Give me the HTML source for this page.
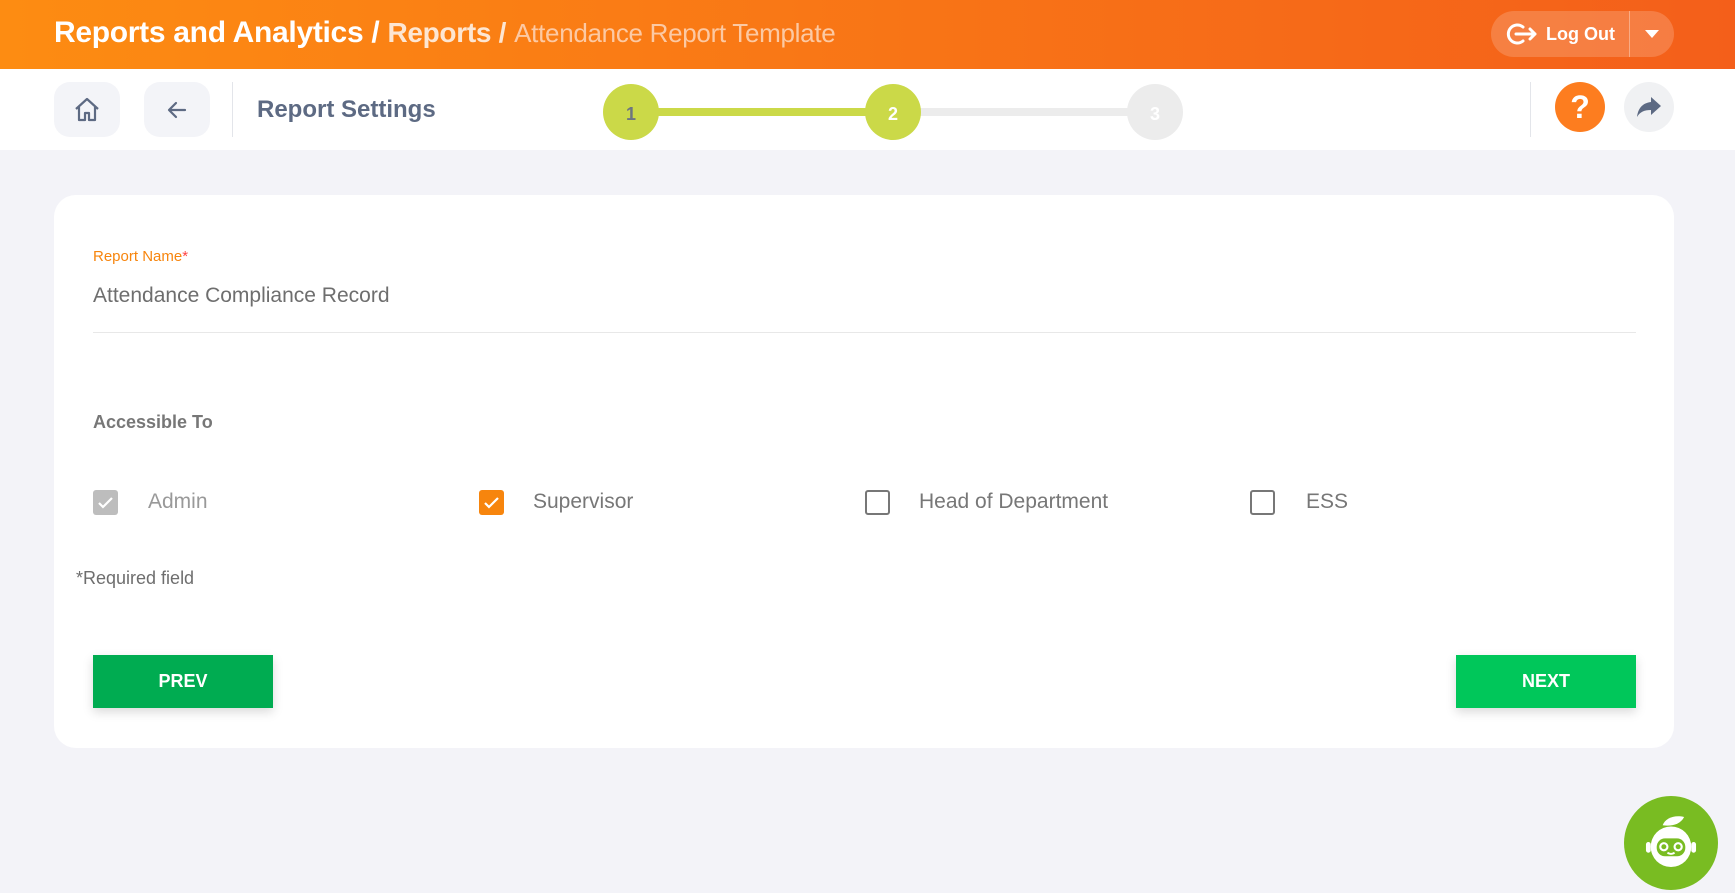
<!DOCTYPE html>
<html><head><meta charset="utf-8"><style>
*{box-sizing:border-box;margin:0;padding:0}
body{width:1735px;height:893px;overflow:hidden;background:#f3f3f8;font-family:"Liberation Sans",sans-serif;position:relative}
.hdr{position:absolute;left:0;top:0;width:1735px;height:69px;background:linear-gradient(90deg,#fd8c12,#f45f1a)}
.ttl{position:absolute;left:54px;top:16px;font-size:30px;font-weight:bold;color:#fff;letter-spacing:-0.3px;white-space:nowrap}
.ttl .b{color:#fde6d2;font-weight:bold;font-size:28px}
.ttl .c{color:#fcc9a3;font-weight:normal;font-size:26px}
.lo{position:absolute;left:1491px;top:11px;width:183px;height:46px;border-radius:23px;background:rgba(255,255,255,.18)}
.lo span{position:absolute;left:55px;top:13px;color:#fff;font-weight:bold;font-size:18px}
.lo .sep{position:absolute;left:138px;top:0;width:1px;height:46px;background:rgba(255,255,255,.35)}
.nav{position:absolute;left:0;top:69px;width:1735px;height:81px;background:#fff}
.sq{position:absolute;top:13px;width:66px;height:55px;border-radius:16px;background:#f3f4f8}
.vd{position:absolute;top:13px;width:1px;height:55px;background:#e3e5ea}
.rs{position:absolute;left:257px;top:27px;font-size:24px;font-weight:bold;color:#5d6a83}
.ln{position:absolute;top:39px;height:8px}
.st{position:absolute;top:15px;width:56px;height:56px;border-radius:50%;text-align:center;line-height:60px;font-weight:bold;font-size:18px}
.card{position:absolute;left:54px;top:195px;width:1620px;height:553px;background:#fff;border-radius:22px}
.lbl{position:absolute;left:93px;top:248px;font-size:15px;color:#f7850d}
.val{position:absolute;left:93px;top:284px;font-size:21px;color:#6e6e6e}
.ul{position:absolute;left:93px;top:332px;width:1543px;height:1px;background:#e8e8e8}
.acc{position:absolute;left:93px;top:412px;font-size:18px;font-weight:bold;color:#777}
.cb{position:absolute;top:490px;width:25px;height:25px;border-radius:3px}
.cl{position:absolute;top:490px;font-size:21px;color:#777}
.req{position:absolute;left:76px;top:568px;font-size:18px;color:#6e6e6e}
.btn{position:absolute;top:655px;width:180px;height:53px;color:#fff;font-weight:bold;font-size:18px;text-align:center;line-height:53px;box-shadow:0 4px 10px rgba(0,0,0,.15)}
.bot{position:absolute;left:1624px;top:796px;width:94px;height:94px;border-radius:50%;background:#79bc22}
</style></head><body>
<div class="hdr">
 <div class="ttl">Reports and Analytics / <span class="b">Reports /</span> <span class="c">Attendance Report Template</span></div>
 <div class="lo">
  <svg style="position:absolute;left:15px;top:11px" width="32" height="24" viewBox="0 0 32 24"><path d="M17 5A9 9 0 1 0 17 19" fill="none" stroke="#fff" stroke-width="3" stroke-linecap="round"/><path d="M10 12H29M24 7l5 5-5 5" fill="none" stroke="#fff" stroke-width="3" stroke-linecap="round" stroke-linejoin="round"/></svg>
  <span>Log Out</span><div class="sep"></div>
  <svg style="position:absolute;left:154px;top:19px" width="14" height="9"><path d="M0 0h14L7 8z" fill="#fff"/></svg>
 </div>
</div>
<div class="nav">
 <div class="sq" style="left:54px"><svg style="position:absolute;left:19px;top:14px" width="28" height="28" viewBox="0 0 28 28"><path d="M3 13L14 3l11 10M6 11v13h6v-7h4v7h6V11" fill="none" stroke="#5d6a83" stroke-width="2.2" stroke-linejoin="round"/></svg></div>
 <div class="sq" style="left:144px"><svg style="position:absolute;left:21px;top:16px" width="24" height="24" viewBox="0 0 24 24"><path d="M20 12H5M11 5l-7 7 7 7" fill="none" stroke="#5d6a83" stroke-width="2.2" stroke-linecap="round" stroke-linejoin="round"/></svg></div>
 <div class="vd" style="left:232px"></div>
 <div class="rs">Report Settings</div>
 <div class="ln" style="left:631px;width:262px;background:#cbd948"></div>
 <div class="ln" style="left:893px;width:262px;background:#ececec"></div>
 <div class="st" style="left:603px;background:#cbd948;color:#6d7580">1</div>
 <div class="st" style="left:865px;background:#cbd948;color:#fff">2</div>
 <div class="st" style="left:1127px;background:#ececec;color:#fff">3</div>
 <div class="vd" style="left:1530px"></div>
 <div style="position:absolute;left:1555px;top:13px;width:50px;height:50px;border-radius:50%;background:#fd7d1f;color:#fff;font-weight:bold;font-size:32px;text-align:center;line-height:50px">?</div>
 <div style="position:absolute;left:1624px;top:13px;width:50px;height:50px;border-radius:50%;background:#f0f1f3"><svg style="position:absolute;left:12px;top:13px" width="26" height="24" viewBox="0 0 26 24"><path d="M15 2l10 9-10 9v-5C8 15 4 17 1 22 2 14 6 8 15 7z" fill="#5d6a83"/></svg></div>
</div>
<div class="card"></div>
<div class="lbl">Report Name<span style="color:#f44">*</span></div>
<div class="val">Attendance Compliance Record</div>
<div class="ul"></div>
<div class="acc">Accessible To</div>
<div class="cb" style="left:93px;background:#bdbdbd"><svg width="25" height="25"><path d="M6 13l4 4 9-9" fill="none" stroke="#fff" stroke-width="2.2"/></svg></div>
<div class="cl" style="left:148px;color:#999">Admin</div>
<div class="cb" style="left:479px;background:#f7850d"><svg width="25" height="25"><path d="M6 13l4 4 9-9" fill="none" stroke="#fff" stroke-width="2.2"/></svg></div>
<div class="cl" style="left:533px">Supervisor</div>
<div class="cb" style="left:865px;border:2px solid #777"></div>
<div class="cl" style="left:919px">Head of Department</div>
<div class="cb" style="left:1250px;border:2px solid #777"></div>
<div class="cl" style="left:1306px">ESS</div>
<div class="req">*Required field</div>
<div class="btn" style="left:93px;background:#00ac51">PREV</div>
<div class="btn" style="left:1456px;background:#00c75a">NEXT</div>
<div class="bot"><svg style="position:absolute;left:17px;top:15px" width="60" height="62" viewBox="0 0 50 52"><path d="M18 12c2-6 10-9 18-7-3 6-10 8-18 7z" fill="#fff"/><circle cx="25" cy="30" r="17" fill="#fff"/><rect x="4" y="26" width="4" height="9" rx="2" fill="#fff"/><rect x="42" y="26" width="4" height="9" rx="2" fill="#fff"/><rect x="13" y="23" width="24" height="15" rx="7" fill="#79bc22"/><circle cx="19" cy="30" r="3" fill="none" stroke="#fff" stroke-width="1.8"/><circle cx="31" cy="30" r="3" fill="none" stroke="#fff" stroke-width="1.8"/><path d="M22 35q3 2 6 0" fill="none" stroke="#fff" stroke-width="1.6"/></svg></div>
</body></html>
